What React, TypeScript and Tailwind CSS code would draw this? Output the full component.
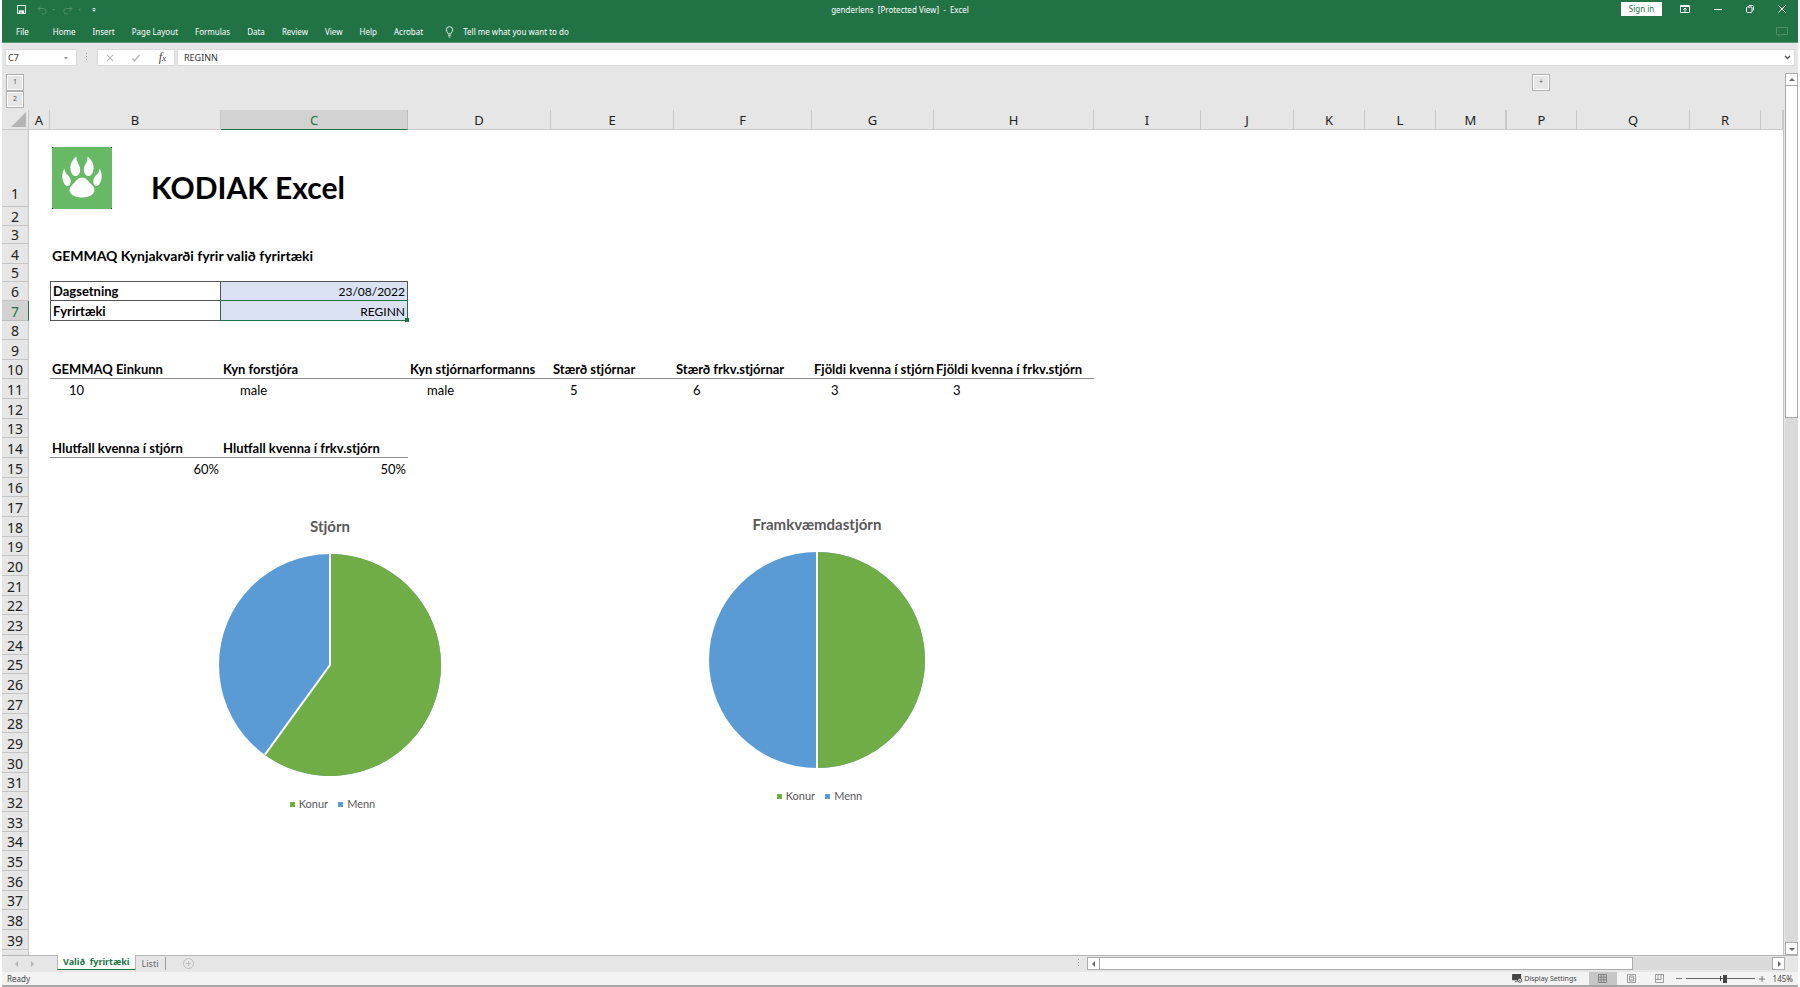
import type { ReactNode } from 'react';

interface CellData {
  text: string;
  bold?: boolean;
  indent?: boolean;
  right?: boolean;
  size?: string;
}

const columns = [
  { name: 'A', width: 'w-[21px]' },
  { name: 'B', width: 'w-[171px]' },
  { name: 'C', width: 'w-[187px]' },
  { name: 'D', width: 'w-[143px]' },
  { name: 'E', width: 'w-[123px]' },
  { name: 'F', width: 'w-[138px]' },
  { name: 'G', width: 'w-[122px]' },
  { name: 'H', width: 'w-[160px]' },
  { name: 'I', width: 'w-[107px]' },
  { name: 'J', width: 'w-[93px]' },
  { name: 'K', width: 'w-[71px]' },
  { name: 'L', width: 'w-[71px]' },
  { name: 'M', width: 'w-[71px]' },
  { name: 'P', width: 'w-[70px]' },
  { name: 'Q', width: 'w-[113px]' },
  { name: 'R', width: 'w-[71px]' },
  { name: '', width: '' },
];

const cells: Record<string, CellData> = {
  B4: { text: 'GEMMAQ Kynjakvarði fyrir valið fyrirtæki', bold: true, size: 'text-[14px]' },
  B6: { text: 'Dagsetning', bold: true },
  C6: { text: '23/08/2022', right: true, size: 'text-[12px]' },
  B7: { text: 'Fyrirtæki', bold: true },
  C7: { text: 'REGINN', right: true, size: 'text-[12px]' },
  B10: { text: 'GEMMAQ Einkunn', bold: true },
  C10: { text: 'Kyn forstjóra', bold: true },
  D10: { text: 'Kyn stjórnarformanns', bold: true },
  E10: { text: 'Stærð stjórnar', bold: true },
  F10: { text: 'Stærð frkv.stjórnar', bold: true },
  G10: { text: 'Fjöldi kvenna í stjórn', bold: true },
  H10: { text: 'Fjöldi kvenna í frkv.stjórn', bold: true },
  B11: { text: '10', indent: true },
  C11: { text: 'male', indent: true },
  D11: { text: 'male', indent: true },
  E11: { text: '5', indent: true },
  F11: { text: '6', indent: true },
  G11: { text: '3', indent: true },
  H11: { text: '3', indent: true },
  B14: { text: 'Hlutfall kvenna í stjórn', bold: true },
  C14: { text: 'Hlutfall kvenna í frkv.stjórn', bold: true },
  B15: { text: '60%', right: true },
  C15: { text: '50%', right: true },
};

const menu = ['Home', 'Insert', 'Page Layout', 'Formulas', 'Data', 'Review', 'View', 'Help', 'Acrobat'];

const rowHeight = (row: number) => {
  if (row === 1) return 'h-[77px]';
  if (row === 3 || row === 5) return 'h-[18px]';
  if (row === 2 || row === 6 || row === 8) return 'h-[19px]';
  if (row === 4 || row === 7) return 'h-[20px]';
  return row % 3 === 1 ? 'h-[19px]' : 'h-[20px]';
};

const cellBorder = (col: string, row: number) => {
  if (row === 10 && col >= 'B' && col <= 'H') return 'border-b border-[#8c8c8c]';
  if (row === 14 && (col === 'B' || col === 'C')) return 'border-b border-[#8c8c8c]';
  if (row === 5 && (col === 'B' || col === 'C')) return 'border-b border-[#555]';
  if ((row === 6 || row === 7) && col === 'B') return 'border-x border-b border-[#555]';
  if ((row === 6 || row === 7) && col === 'C') return 'border-r border-b border-[#555] bg-[#d9e1f2]';
  return '';
};

function PawLogo() {
  return (
    <svg viewBox="0 0 60 62" className="absolute left-[2px] top-[17px] h-[62px] w-[60px]" aria-label="Kodiak">
      <rect width="60" height="62" fill="#68b965" />
      <path d="M0 0h1v1H0zM59 0h1v1h-1zM0 61h1v1H0zM59 61h1v1h-1z" fill="#333" />
      <g fill="#fff">
        <path d="M24.500 9.500C20 13 18 17 18.500 22C19 27 21.500 29.500 24 29C27.500 28.500 28.500 25 28 21C27.500 17.500 24 15 24.500 9.500Z" />
        <path d="M35.500 9.500C40 13 42 17 41.500 22C41 27 38.500 29.500 36 29C32.500 28.500 31.500 25 32 21C32.500 17.500 36 15 35.500 9.500Z" />
        <path d="M12.500 21.500C10 25 9.800 30 11 34C12.500 38 15 40 17 38.500C19.500 36.500 19 32 17 29.500C15 27 12.500 26 12.500 21.500Z" />
        <path d="M47.500 21.500C50 25 50.200 30 49 34C47.500 38 45 40 43 38.500C40.500 36.500 41 32 43 29.500C45 27 47.500 26 47.500 21.500Z" />
        <path d="M30 30.500C34 30.500 35.500 33.500 38.500 36.500C41 39 42.500 40.500 42.500 43.500C42 48 36 50.500 30 50.500C24 50.500 18 48 17.500 43.500C17.500 40.500 19 39 21.500 36.500C24.500 33.500 26 30.500 30 30.500Z" />
      </g>
    </svg>
  );
}

function Arrow({ dir, className = 'size-[6px]' }: { dir: 'up' | 'down' | 'left' | 'right'; className?: string }) {
  const d = {
    up: 'M0 4l3-3 3 3z',
    down: 'M0 2l3 3 3-3z',
    left: 'M4 0L1 3l3 3z',
    right: 'M2 0l3 3-3 3z',
  }[dir];
  return (
    <svg viewBox="0 0 6 6" className={className} fill="currentColor">
      <path d={d} />
    </svg>
  );
}

function ScrollButton({ dir }: { dir: 'up' | 'down' | 'left' | 'right' }) {
  return (
    <button
      type="button"
      aria-label={`Scroll ${dir}`}
      className="flex size-[13px] shrink-0 items-center justify-center border border-[#ababab] bg-white text-[#666]"
    >
      <Arrow dir={dir} />
    </button>
  );
}

function OutlineButton({ children }: { children: ReactNode }) {
  return (
    <button
      type="button"
      className="flex h-[17px] w-[18px] items-center justify-center border border-[#b0b0b0] bg-[#e6e6e6] text-[7px] text-[#555] shadow-[inset_0_0_0_1px_#fff]"
    >
      {children}
    </button>
  );
}

function TitleBar() {
  return (
    <div className="grid h-[22px] grid-cols-[1fr_auto_1fr] items-start">
      <div className="flex h-[19px] items-center pl-[15px]">
        <button type="button" aria-label="Save">
          <svg viewBox="0 0 10 10" className="size-[9px]" fill="none" stroke="#fff">
            <path d="M.5.5h9v9h-9z" />
            <path d="M2 6h6v3.500H2z" fill="#fff" stroke="none" />
            <path d="M4.500 7.500v2" stroke="#217346" />
          </svg>
        </button>
        <button type="button" aria-label="Undo" className="ml-[11px] flex items-center gap-[5px] text-[#4f9069]">
          <svg viewBox="0 0 10 10" className="size-[10px]" fill="none" stroke="currentColor">
            <path d="M3.500 1L1 3.500 3.500 6M1 3.500h5.500a2.700 2.700 0 010 5.500H5" />
          </svg>
          <Arrow dir="down" className="size-[3px]" />
        </button>
        <button type="button" aria-label="Redo" className="ml-[8px] flex items-center gap-[5px] text-[#4f9069]">
          <svg viewBox="0 0 10 10" className="size-[10px]" fill="none" stroke="currentColor">
            <path d="M6.500 1L9 3.500 6.500 6M9 3.500H3.500a2.700 2.700 0 000 5.500H5" />
          </svg>
          <Arrow dir="down" className="size-[3px]" />
        </button>
        <button type="button" aria-label="Customize toolbar" className="ml-[11px]">
          <svg viewBox="0 0 6 6" className="size-[4px]" fill="#fff">
            <path d="M1 0h4v1H1zM0 2.500h6L3 5.500z" />
          </svg>
        </button>
      </div>
      <div className="h-[19px] text-[8px] leading-[19px] whitespace-pre">genderlens  [Protected View]  -  Excel</div>
      <div className="flex h-[18px] items-center justify-end pr-[12px]">
        <button type="button" className="h-[14px] w-[41px] bg-white text-[8px] leading-[14px] text-[#217346]">
          Sign in
        </button>
        <button type="button" aria-label="Ribbon display options" className="ml-[18px]">
          <svg viewBox="0 0 10 8" className="h-[8px] w-[10px]" fill="none" stroke="#fff">
            <path d="M.5.5h9v7h-9zM.5 1.500h9M5 7V3M3.500 4.500L5 3l1.500 1.500" />
          </svg>
        </button>
        <button type="button" aria-label="Minimize" className="ml-[24px] h-[1px] w-[8px] bg-white" />
        <button type="button" aria-label="Restore" className="ml-[24px]">
          <svg viewBox="0 0 8 8" className="size-[8px]" fill="none" stroke="#fff">
            <rect x=".5" y="2" width="5.500" height="5.500" rx="1" />
            <path d="M2.500 1.500l.5-1h3.500q1 0 1 1V5l-1 .5" />
          </svg>
        </button>
        <button type="button" aria-label="Close" className="ml-[24px]">
          <svg viewBox="0 0 8 8" className="size-[8px]" fill="none" stroke="#fff">
            <path d="M.5.5l7 7M7.500.5l-7 7" />
          </svg>
        </button>
      </div>
    </div>
  );
}

function MenuBar() {
  return (
    <nav className="flex h-[21px] items-center gap-[17px] border-b border-[#5b9a76] pl-[14px] text-[8px] leading-[20px]">
      <button type="button" className="mr-[7px]">File</button>
      {menu.map((item) => (
        <button key={item} type="button">{item}</button>
      ))}
      <button type="button" className="ml-[5px] flex items-center gap-[9px]">
        <svg viewBox="0 0 9 13" className="h-[12px] w-[9px]" fill="none" stroke="#fff" strokeWidth=".9">
          <path d="M3 8.500C3 7 1 6.500 1 4.200a3.500 3.500 0 017 0C8 6.500 6 7 6 8.500zM3 10.200h3M3.500 12h2" />
        </svg>
        Tell me what you want to do
      </button>
      <button type="button" aria-label="Comments" className="mr-[10px] ml-auto">
        <svg viewBox="0 0 12 10" className="h-[10px] w-[12px]" fill="none" stroke="#4f9069">
          <path d="M.5.5h11v7H5L3 9.500v-2H.5z" />
        </svg>
      </button>
    </nav>
  );
}

function FormulaBar() {
  return (
    <div className="flex h-[30px] items-start pt-[6px] pr-[3px] pl-[3px] text-[9px] text-[#333]">
      <div className="flex h-[17px] w-[72px] items-center border border-[#dadada] bg-white pr-[8px] pl-[2px]">
        <input aria-label="Name box" readOnly value="C7" className="w-full min-w-0 outline-none" />
        <Arrow dir="down" className="size-[4px] shrink-0 text-[#777]" />
      </div>
      <svg viewBox="0 0 2 9" className="mx-[9px] mt-[4px] h-[9px] w-[2px]" fill="#999">
        <path d="M0 0h1v1H0zM0 3h1v1H0zM0 6h1v1H0z" />
      </svg>
      <div className="flex h-[17px] w-[78px] items-center justify-between border border-[#dadada] bg-white px-[8px]">
        <button type="button" aria-label="Cancel">
          <svg viewBox="0 0 9 9" className="size-[8px]" fill="none" stroke="#b5b5b5" strokeWidth="1.200">
            <path d="M1 1l7 7M8 1L1 8" />
          </svg>
        </button>
        <button type="button" aria-label="Enter">
          <svg viewBox="0 0 10 9" className="h-[8px] w-[10px]" fill="none" stroke="#b5b5b5" strokeWidth="1.600">
            <path d="M1 5l2.500 2.500L9 1" />
          </svg>
        </button>
        <button type="button" className="font-['Liberation_Serif',serif] text-[12px] leading-[14px] text-[#444] italic">
          f<span className="text-[9px]">x</span>
        </button>
      </div>
      <div className="ml-[2px] flex h-[17px] flex-1 items-center border border-[#dadada] bg-white pr-[3px] pl-[6px]">
        <input aria-label="Formula" readOnly value="REGINN" className="min-w-0 flex-1 outline-none" />
        <svg viewBox="0 0 7 5" className="h-[5px] w-[7px]" fill="none" stroke="#555" strokeWidth="1.400">
          <path d="M1 1l2.500 2.500L6 1" />
        </svg>
      </div>
    </div>
  );
}

function Sheet() {
  const rows = Array.from({ length: 40 }, (_, i) => i + 1);
  return (
    <table className="w-full table-fixed border-separate border-spacing-0 bg-white">
      <colgroup>
        <col className="w-[27px]" />
        {columns.map((c) => (
          <col key={c.name} className={c.width} />
        ))}
      </colgroup>
      <thead>
        <tr className="h-[20px] bg-[#e6e6e6] text-[13px] leading-[18px]">
          <th className="border-r border-b border-[#c9c9c9] p-0">
            <svg viewBox="0 0 16 16" className="mr-[2px] ml-auto size-[15px]" fill="#b4b4b4">
              <path d="M16 0v16H0z" />
            </svg>
          </th>
          {columns.map((c) => (
            <th
              key={c.name}
              scope="col"
              className={`p-0 font-normal ${
                c.name === 'C'
                  ? 'border-r border-b border-r-[#bdbdbd] border-b-[#217346] bg-[#d2d2d2] text-[#217346]'
                  : c.name === 'M'
                    ? 'border-r-2 border-b border-[#c9c9c9] text-[#222]'
                    : 'border-r border-b border-[#c9c9c9] text-[#222]'
              }`}
            >
              {c.name}
            </th>
          ))}
        </tr>
      </thead>
      <tbody className="font-[Lato,'Noto_Sans',sans-serif] text-[13px] leading-[17px] text-black">
        {rows.map((row) => (
          <tr key={row} className={rowHeight(row)}>
            <th
              scope="row"
              className={`border-r border-b p-0 align-bottom font-['Noto_Sans',sans-serif] text-[14px] font-normal ${
                row === 1 ? 'pb-[4px]' : ''
              } ${
                row === 7
                  ? 'border-r-[#217346] border-b-[#bdbdbd] bg-[#d2d2d2] text-[#217346]'
                  : 'border-[#c4c4c4] bg-[#e6e6e6] text-[#222]'
              }`}
            >
              {row}
            </th>
            {columns.map((c) => {
              const id = `${c.name}${row}`;
              const cell = cells[id];
              if (id === 'B1') {
                return (
                  <td key={id} className="relative p-0 pb-[2px] pl-[101px] align-bottom">
                    <PawLogo />
                    <h1 className="text-[30px] leading-[36px] font-bold whitespace-nowrap">KODIAK Excel</h1>
                  </td>
                );
              }
              return (
                <td
                  key={id}
                  className={`relative p-0 align-bottom whitespace-nowrap ${cellBorder(c.name, row)} ${
                    cell?.right ? 'pr-[2px] text-right' : cell?.indent ? 'pl-[19px]' : 'pl-[2px]'
                  } ${cell?.bold ? 'font-bold' : ''} ${cell?.size ?? ''}`}
                >
                  {cell?.text}
                  {id === 'C7' && (
                    <span className="absolute -inset-[1px] border border-[#217346]">
                      <span className="absolute -right-[2px] -bottom-[2px] size-[4px] bg-[#217346]" />
                    </span>
                  )}
                </td>
              );
            })}
          </tr>
        ))}
      </tbody>
    </table>
  );
}

function PieChart({ title, women, size, place }: { title: string; women: number; size: string; place: string }) {
  const angle = women * 2 * Math.PI;
  const x = 111 + 111 * Math.sin(angle);
  const y = 111 - 111 * Math.cos(angle);
  return (
    <figure
      className={`absolute flex w-[260px] flex-col items-center font-[Lato,'Noto_Sans',sans-serif] text-[#595959] ${place}`}
    >
      <figcaption className="text-[15px] leading-[24px] font-bold">{title}</figcaption>
      <svg viewBox="0 0 222 222" className={`mt-[16px] ${size}`}>
        <circle cx="111" cy="111" r="111" fill="#5b9bd5" />
        <path d={`M111 111V0A111 111 0 ${women > 0.5 ? 1 : 0} 1 ${x} ${y}z`} fill="#70ad47" />
        <path d={`M111 -2V111L${x} ${y}`} fill="none" stroke="#fff" strokeWidth="2" />
      </svg>
      <div className="mt-[20px] flex gap-[10px] pl-[5px] text-[11px] leading-[16px]">
        <span className="flex items-center gap-[4px]">
          <i className="size-[5px] bg-[#70ad47]" />
          Konur
        </span>
        <span className="flex items-center gap-[4px]">
          <i className="size-[5px] bg-[#5b9bd5]" />
          Menn
        </span>
      </div>
    </figure>
  );
}

function TabBar() {
  return (
    <div className="flex h-[17px] items-start border-t border-[#b5b5b5] bg-[#e6e6e6]">
      <div className="flex h-[15px] w-[55px] items-center gap-[9px] pl-[12px] text-[#b5b5b5]">
        <button type="button" aria-label="Previous sheet"><Arrow dir="left" /></button>
        <button type="button" aria-label="Next sheet"><Arrow dir="right" /></button>
      </div>
      <button
        type="button"
        className="-mt-px h-[15px] border-x border-b border-x-[#b5b5b5] border-b-[#217346] bg-white px-[5px] text-[9px] leading-[14px] font-bold whitespace-pre text-[#217346]"
      >
        Valið  fyrirtæki
      </button>
      <button type="button" className="mt-[1px] h-[13px] border-r border-[#999] pr-[7px] pl-[6px] text-[9px] leading-[13px] text-[#666]">
        Listi
      </button>
      <button type="button" aria-label="New sheet" className="mt-[2px] ml-[17px]">
        <svg viewBox="0 0 11 11" className="size-[11px]" fill="none" stroke="#bdbdbd">
          <path d="M5.500 3v5M3 5.500h5" />
          <circle cx="5.500" cy="5.500" r="5" />
        </svg>
      </button>
      <div className="mt-[1px] ml-auto flex w-[720px] items-center gap-[8px]">
        <svg viewBox="0 0 1 9" className="h-[9px] w-[1px]" fill="#999">
          <path d="M0 0h1v1H0zM0 3h1v1H0zM0 6h1v1H0z" />
        </svg>
        <div className="flex h-[13px] flex-1 bg-[#dadada]">
          <ScrollButton dir="left" />
          <div className="flex-[534] border-y border-r border-[#ababab] bg-white" />
          <div className="flex-[140]" />
          <ScrollButton dir="right" />
        </div>
        <div className="w-[5px]" />
      </div>
    </div>
  );
}

function StatusBar() {
  return (
    <footer className="flex h-[15px] items-center border-b-2 border-[#a6a6a6] bg-[#f3f3f3] pr-[5px] pl-[5px] text-[8px] leading-[13px] text-[#444]">
      <span>Ready</span>
      <button type="button" className="ml-auto flex items-center gap-[1px] text-[7px]">
        <svg viewBox="0 0 12 10" className="h-[9px] w-[11px]">
          <path d="M0 0h10v7H0zM3 8h3v1H3z" fill="#444" />
          <circle cx="8.500" cy="7" r="2.200" fill="#f3f3f3" stroke="#444" />
          <circle cx="8.500" cy="7" r=".7" fill="#444" />
        </svg>
        Display Settings
      </button>
      <button type="button" aria-label="Normal view" className="ml-[12px] flex h-[13px] w-[28px] items-center justify-center bg-[#c6c6c6]">
        <svg viewBox="0 0 9 9" className="size-[9px]" fill="none" stroke="#777" strokeWidth=".8">
          <path d="M.5.5h8v8h-8zM.5 3.200h8M.5 5.800h8M3.200.5v8M5.800.5v8" />
        </svg>
      </button>
      <button type="button" aria-label="Page layout view" className="ml-[10px]">
        <svg viewBox="0 0 9 9" className="size-[9px]" fill="none" stroke="#888" strokeWidth=".8">
          <path d="M.5.5h8v8h-8zM2.500 2h4v5h-4zM3.500 3.500h2M3.500 5.500h2" />
        </svg>
      </button>
      <button type="button" aria-label="Page break preview" className="ml-[19px]">
        <svg viewBox="0 0 9 9" className="size-[9px]" fill="none" stroke="#888" strokeWidth=".8">
          <path d="M.5.5h8v8h-8zM3 .5v5M6 .5v5M.5 5.500H6" />
        </svg>
      </button>
      <button type="button" aria-label="Zoom out" className="ml-[12px] h-[1px] w-[6px] bg-[#777]" />
      <input
        type="range"
        aria-label="Zoom"
        min={0}
        max={100}
        defaultValue={58}
        className="ml-[4px] h-[9px] w-[69px] appearance-none bg-[linear-gradient(#444,#444),linear-gradient(#666,#666)] bg-[length:1px_5px,100%_1px] bg-center bg-no-repeat [&::-webkit-slider-thumb]:h-[8px] [&::-webkit-slider-thumb]:w-[4px] [&::-webkit-slider-thumb]:appearance-none [&::-webkit-slider-thumb]:bg-[#444]"
      />
      <button type="button" aria-label="Zoom in" className="ml-[4px]">
        <svg viewBox="0 0 6 6" className="size-[6px]" stroke="#777">
          <path d="M3 0v6M0 3h6" />
        </svg>
      </button>
      <span className="ml-[8px]">145%</span>
    </footer>
  );
}

export default function App() {
  return (
    <div className="flex h-screen flex-col overflow-hidden bg-white pr-[2px] pl-[2px] font-['Noto_Sans',sans-serif]">
      <header className="bg-[#217346] text-white">
        <TitleBar />
        <MenuBar />
      </header>
      <div className="bg-[#e6e6e6]">
        <FormulaBar />
      </div>

      <main className="flex min-h-0 flex-1 bg-[#e6e6e6]">
        <div className="flex min-w-0 flex-1 flex-col">
          {/* outline levels above the column headers */}
          <div className="flex h-[37px] shrink-0 items-start justify-between pt-[1px] pr-[234px] pl-[4px]">
            <div>
              <OutlineButton>1</OutlineButton>
              <OutlineButton>2</OutlineButton>
            </div>
            <OutlineButton>+</OutlineButton>
          </div>
          <div className="relative min-h-0 flex-1 overflow-hidden border-r border-[#c4c4c4]">
            <Sheet />
            <PieChart title="Stjórn" women={0.6} size="size-[222px]" place="left-[198px] top-[404px]" />
            <PieChart title="Framkvæmdastjórn" women={0.5} size="size-[216px]" place="left-[685px] top-[402px]" />
          </div>
        </div>
        <div className="flex w-[14px] flex-col items-end bg-[#e6e6e6]">
          <div className="flex w-[13px] flex-1 flex-col bg-[#dadada]">
            <ScrollButton dir="up" />
            <div className="flex-[333] border-x border-b border-[#ababab] bg-white" />
            <div className="flex-[526]" />
            <ScrollButton dir="down" />
          </div>
        </div>
      </main>

      <TabBar />
      <StatusBar />
    </div>
  );
}
